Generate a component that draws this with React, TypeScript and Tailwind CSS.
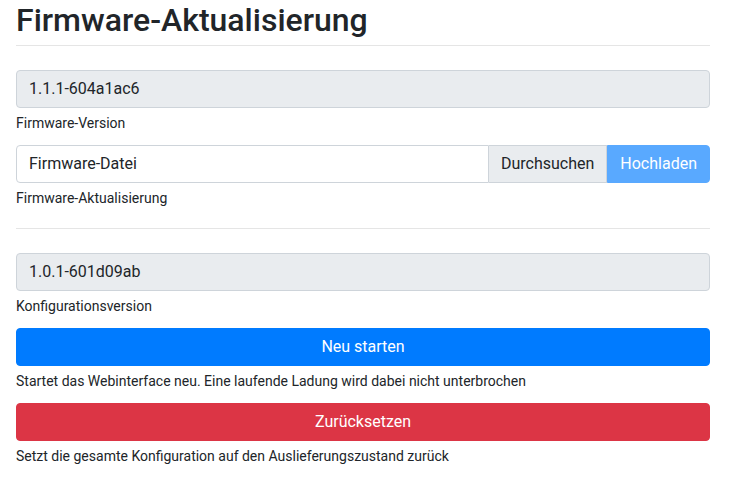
export default function App() {
  return (
    <div className="min-h-screen bg-white pl-4 pr-[23px] text-[#212529]" style={{ fontFamily: "Roboto, 'Liberation Sans', sans-serif" }}>
      {/* Header */}
      <h3 className="pt-[1px] pb-[6px] text-[32px] leading-[38px] font-medium border-b border-[#e5e5e5]">
        Firmware-Aktualisierung
      </h3>

      <div className="mt-[24px]">
        <div className="h-[38px] px-3 flex items-center rounded border border-[#ced4da] bg-[#e9ecef] text-base">
          1.1.1-604a1ac6
        </div>
        <div className="pt-[5px] mb-[11px] text-[14px] leading-[21px]">Firmware-Version</div>
      </div>

      <div>
        <div className="flex h-[38px]">
          <div className="flex-1 flex items-center px-3 rounded-l border border-[#ced4da] bg-white text-base">
            Firmware-Datei
          </div>
          <div className="flex items-center px-3 border-y border-r border-[#ced4da] bg-[#e9ecef] text-base">
            Durchsuchen
          </div>
          <button className="px-3 rounded-r border border-[#59a9ff] bg-[#59a9ff] text-base text-white">
            Hochladen
          </button>
        </div>
        <div className="pt-[5px] text-[14px] leading-[21px]">Firmware-Aktualisierung</div>
      </div>

      <hr className="mt-[19px] mb-[24px] border-0 border-t border-[#e5e5e5]" />

      <div>
        <div className="h-[38px] px-3 flex items-center rounded border border-[#ced4da] bg-[#e9ecef] text-base">
          1.0.1-601d09ab
        </div>
        <div className="pt-[5px] mb-[11px] text-[14px] leading-[21px]">Konfigurationsversion</div>
      </div>

      <div>
        <button className="w-full h-[38px] rounded border border-[#007bff] bg-[#007bff] text-base text-white">
          Neu starten
        </button>
        <div className="pt-[5px] mb-[11px] text-[14px] leading-[21px]">
          Startet das Webinterface neu. Eine laufende Ladung wird dabei nicht unterbrochen
        </div>
      </div>

      <div>
        <button className="w-full h-[38px] rounded border border-[#dc3545] bg-[#dc3545] text-base text-white">
          Zurücksetzen
        </button>
        <div className="pt-[5px] mb-[11px] text-[14px] leading-[21px]">
          Setzt die gesamte Konfiguration auf den Auslieferungszustand zurück
        </div>
      </div>
    </div>
  )
}
